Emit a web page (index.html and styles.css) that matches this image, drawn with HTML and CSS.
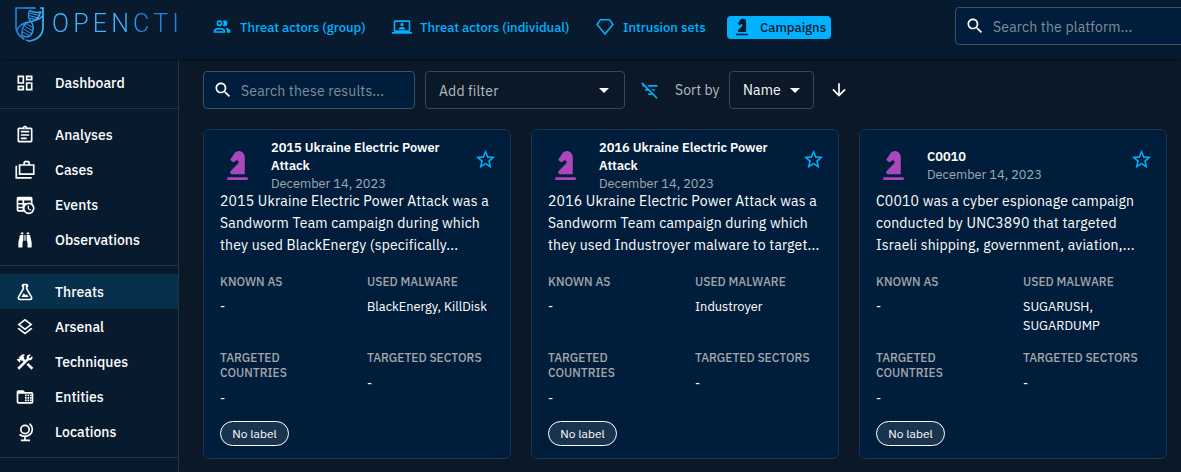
FILE: index.html
```html
<!DOCTYPE html>
<html lang="en">
<head>
<meta charset="utf-8">
<title>OpenCTI - Campaigns</title>
<link rel="stylesheet" href="styles.css">
</head>
<body>
<svg class="defs" width="0" height="0">
  <defs>
    <symbol id="knight" viewBox="0 0 24 24"><path d="M19,22H5V20H19V22M13,2V2C11.75,2 10.58,2.62 9.89,3.66L7,8L9,10L11.06,8.63C11.5,8.32 12.14,8.44 12.45,8.9C12.47,8.93 12.5,8.96 12.5,9V9C12.8,9.59 12.69,10.3 12.22,10.77L7.42,15.57C6.87,16.13 6.87,17.03 7.43,17.58C7.69,17.84 8.05,18 8.42,18H17V6A4,4 0 0,0 13,2Z"/></symbol>
    <symbol id="search" viewBox="0 0 24 24"><path d="M15.5 14h-.79l-.28-.27C15.41 12.59 16 11.11 16 9.5 16 5.91 13.09 3 9.5 3S3 5.91 3 9.5 5.91 16 9.5 16c1.61 0 3.09-.59 4.23-1.57l.27.28v.79l5 4.99L20.49 19l-4.99-5zm-6 0C7.01 14 5 11.99 5 9.5S7.01 5 9.5 5 14 7.01 14 9.5 11.99 14 9.5 14z"/></symbol>
    <symbol id="star" viewBox="0 0 24 24"><path d="m22 9.24-7.19-.62L12 2 9.19 8.63 2 9.24l5.46 4.73L5.82 21 12 17.27 18.18 21l-1.63-7.03L22 9.24zM12 15.4l-3.76 2.27 1-4.28-3.32-2.88 4.38-.38L12 6.1l1.71 4.04 4.38.38-3.32 2.88 1 4.28L12 15.4z"/></symbol>
    <symbol id="caret" viewBox="0 0 24 24"><path d="M7 10l5 5 5-5z"/></symbol>
  </defs>
</svg>
<header class="topbar">
  <div class="logo">
    <svg class="logo-mark" viewBox="0 0 30 36">
      <defs><linearGradient id="shield" gradientUnits="userSpaceOnUse" x1="0" x2="29" y1="0" y2="0"><stop offset="0" stop-color="#1f7bd8"/><stop offset="1" stop-color="#3fb4ff"/></linearGradient></defs>
      <g stroke="url(#shield)">
        <path stroke-width="1.7" d="M20.500 1H1V20c0 5.500 3.500 9.500 8.500 12.500M25 1h3v19c0 8-6 12.500-13.500 14.200L11 33"/>
        <path stroke-width="1.400" d="M14.500 3.500c-1.500 4-2 8 1.500 11 5-1 8.500-4.500 9.500-9.500M14.500 3.500c4 2 8 2.500 12 1.500M16 14.500c-7 1.500-9.500 7-9 14 3 1.500 6.500 2 9-.5 3-4 3-10 0-13.500M27.500 9c-3 3.500-6 4.500-11.500 5.500C9 15 4 18.500 1.500 24"/>
        <path stroke-width="1" d="M14.500 6l10 2.500M14 8.500l9.500 2.500M14.500 11l6.500 1.500M12.500 17.500l5.500 3M10 19.500l8 4.500M8.500 22l8.500 5M8 25l7 4"/>
      </g>
    </svg>
    <span class="logo-text">OPENCTI</span>
  </div>
  <nav class="tabs">
    <a class="tab t-group"><svg class="i20" viewBox="0 0 24 24"><path d="M13.07 10.41A5 5 0 0 0 13.07 4.59A3.39 3.39 0 0 1 15 4A3.5 3.5 0 0 1 15 11A3.39 3.39 0 0 1 13.07 10.41M5.5 7.5A3.5 3.5 0 1 1 9 11A3.5 3.5 0 0 1 5.5 7.5M7.5 7.5A1.5 1.5 0 1 0 9 6A1.5 1.5 0 0 0 7.5 7.5M16 17V19H2V17S2 13 9 13 16 17 16 17M14 17C13.86 16.22 12.67 15 9 15S4.07 16.31 4 17M15.95 13A5.32 5.32 0 0 1 18 17V19H22V17S22 13.37 15.94 13Z"/></svg><span>Threat actors (group)</span></a>
    <a class="tab t-individual"><svg class="i20" viewBox="0 0 24 24"><path fill-rule="evenodd" d="M4 4h16a2 2 0 0 1 2 2v10a2 2 0 0 1-2 2h4v2H0v-2h4a2 2 0 0 1-2-2V6c0-1.100.9-2 2-2zm0 2v10h16V6zm8 1a2 2 0 1 1 0 4 2 2 0 0 1 0-4zm4 8H8v-1c0-1.330 2.670-2 4-2s4 .67 4 2z"/></svg><span>Threat actors (individual)</span></a>
    <a class="tab t-sets"><svg class="i20" viewBox="0 0 24 24"><path fill="none" stroke="currentColor" stroke-width="1.900" d="M6.500 3.200h11L21.500 9 12 20.500 2.500 9z"/></svg><span>Intrusion sets</span></a>
    <a class="tab t-campaigns active"><svg class="i20" viewBox="0 0 24 24"><use href="#knight"/></svg><span>Campaigns</span></a>
  </nav>
  <div class="field global-search"><svg class="i20"><use href="#search"/></svg><span>Search the platform...</span></div>
</header>
<div class="shell">
  <aside class="sidebar">
    <div class="group first">
      <a class="item"><svg class="i20" viewBox="0 0 24 24"><path d="M19 5v2h-4V5h4M9 5v6H5V5h4m10 8v6h-4v-6h4M9 17v2H5v-2h4M21 3h-8v6h8V3zM11 3H3v10h8V3zm10 8h-8v10h8V11zm-10 4H3v6h8v-6z"/></svg><span>Dashboard</span></a>
    </div>
    <div class="group">
      <a class="item"><svg class="i20" viewBox="0 0 24 24"><path d="M7 15h7v2H7zm0-4h10v2H7zm0-4h10v2H7zm12-4h-4.18C14.4 1.84 13.3 1 12 1c-1.3 0-2.4.84-2.82 2H5c-.14 0-.27.01-.4.04-.39.08-.74.28-1.01.55-.18.18-.33.4-.43.64-.1.23-.16.49-.16.77v14c0 .27.06.54.16.78s.25.45.43.64c.27.27.62.47 1.01.55.13.02.26.03.4.03h14c1.1 0 2-.9 2-2V5c0-1.1-.9-2-2-2zm-7-.25c.41 0 .75.34.75.75s-.34.75-.75.75-.75-.34-.75-.75.34-.75.75-.75zM19 19H5V5h14v14z"/></svg><span>Analyses</span></a>
      <a class="item"><svg class="i20" viewBox="0 0 24 24"><path fill="none" stroke="currentColor" stroke-width="2" d="M1.500 7v14.500H20M6.500 6H22.500V17H5.500V6zM11 6V3l1-1h4l1 1v3"/></svg><span>Cases</span></a>
      <a class="item"><svg class="i20" viewBox="0 0 24 24"><path fill-rule="evenodd" d="M4 2h15a2 2 0 0 1 2 2v6.200A7 7 0 0 1 11.200 20H4a2 2 0 0 1-2-2V4c0-1.100.9-2 2-2zm0 4.500v3h5v-3zm7 0v3h8v-3zM4 11.500v2.500h5v-2.500zm0 4.500v2h5v-2z"/><circle class="clock-face" cx="16.500" cy="16" r="6"/><path fill="none" stroke="currentColor" stroke-width="1.500" d="M16 12.500v4l3 1.800"/></svg><span>Events</span></a>
      <a class="item"><svg class="i20" viewBox="0 0 24 24"><path d="M9,20A1,1 0 0,1 8,21H5A1,1 0 0,1 4,20V15L6,6H10V13A1,1 0 0,1 9,14V20M10,5H7V3H10V5M15,20V14A1,1 0 0,1 14,13V6H18L20,15V20A1,1 0 0,1 19,21H16A1,1 0 0,1 15,20M14,5V3H17V5H14Z"/><path opacity=".7" d="M11 6h2v7h-2z"/></svg><span>Observations</span></a>
    </div>
    <div class="group">
      <a class="item selected"><svg class="i20" viewBox="0 0 24 24"><path d="M5,19A1,1 0 0,0 6,20H18A1,1 0 0,0 19,19C19,18.79 18.93,18.59 18.82,18.43L13,8.35V4H11V8.35L5.18,18.43C5.07,18.59 5,18.79 5,19M6,22A3,3 0 0,1 3,19C3,18.4 3.18,17.84 3.5,17.37L9,7.81V6A1,1 0 0,1 8,5V4A2,2 0 0,1 10,2H14A2,2 0 0,1 16,4V5A1,1 0 0,1 15,6V7.81L20.5,17.37C20.82,17.84 21,18.4 21,19A3,3 0 0,1 18,22H6M13,16L14.34,14.66L16.27,18H7.73L10.39,13.39L13,16Z"/></svg><span>Threats</span></a>
      <a class="item"><svg class="i20" viewBox="0 0 24 24"><path d="M11.99 18.54l-7.37-5.73L3 14.07l9 7 9-7-1.63-1.27zM12 16l7.36-5.73L21 9l-9-7-9 7 1.63 1.27L12 16zm0-11.47L17.74 9 12 13.47 6.26 9 12 4.53z"/></svg><span>Arsenal</span></a>
      <a class="item"><svg class="i20" viewBox="0 0 24 24"><path d="m13.7826 15.1719 2.1213-2.1213 5.9963 5.9962-2.1213 2.1213zM17.5 10c1.93 0 3.5-1.57 3.5-3.5 0-.58-.16-1.12-.41-1.6l-2.7 2.7-1.49-1.49 2.7-2.7c-.48-.25-1.02-.41-1.6-.41C15.57 3 14 4.57 14 6.5c0 .41.08.8.21 1.16l-1.85 1.85-1.78-1.78.71-.71-1.41-1.41L12 3.49c-1.17-1.17-3.07-1.17-4.24 0L4.22 7.03l1.41 1.41H2.81l-.71.71 3.54 3.54.71-.71V9.15l1.41 1.41.71-.71 1.78 1.78-7.41 7.41 2.12 2.12L16.34 9.79c.36.13.75.21 1.16.21z"/></svg><span>Techniques</span></a>
      <a class="item"><svg class="i20" viewBox="0 0 24 24"><path fill-rule="evenodd" d="M4 4h6l2 2h8a2 2 0 0 1 2 2v10a2 2 0 0 1-2 2H4a2 2 0 0 1-2-2V6c0-1.100.9-2 2-2zm0 4v10h16V8z"/><path d="M12 9h2v2h-2zm3 0h2v2h-2zm3 0h2v2h-2zm-6 3h2v2h-2zm3 0h2v2h-2zm3 0h2v2h-2zm-6 3h2v2h-2zm3 0h2v2h-2zm3 0h2v2h-2z"/></svg><span>Entities</span></a>
      <a class="item"><svg class="i20" viewBox="0 0 24 24"><path fill="none" stroke="currentColor" stroke-width="2" d="M12 4a5 5 0 1 1 0 10 5 5 0 0 1 0-10zM17.500 2c4.500 4 4 10 .5 13s-9 3-12.500 0M12 17v4M7 22h11"/></svg><span>Locations</span></a>
    </div>
  </aside>
  <main class="content">
    <div class="toolbar">
      <div class="field list-search"><svg class="i20"><use href="#search"/></svg><span>Search these results...</span></div>
      <div class="select filter"><span>Add filter</span><svg class="i24"><use href="#caret"/></svg></div>
      <svg class="i20 clear" viewBox="0 0 24 24"><path d="M10.83 8H21V6H8.83l2 2zm5 5H18v-2h-4.17l2 2zM14 16.83V18h-4v-2h3.17l-3-3H6v-2h2.17l-3-3H3V6h.17L1.39 4.22 2.8 2.81l18.38 18.38-1.41 1.41L14 16.83z"/></svg>
      <span class="sort-label">Sort by</span>
      <div class="select sort"><span>Name</span><svg class="i24"><use href="#caret"/></svg></div>
      <svg class="i20 direction" viewBox="0 0 24 24"><path d="M20 12l-1.41-1.41L13 16.17V4h-2v12.17l-5.58-5.59L4 12l8 8 8-8z"/></svg>
    </div>
    <div class="cards">
      <article class="card">
        <div class="card-head">
          <svg class="knight"><use href="#knight"/></svg>
          <div class="heading"><h2>2015 Ukraine Electric Power<br>Attack</h2><time>December 14, 2023</time></div>
          <svg class="star"><use href="#star"/></svg>
        </div>
        <p class="description">2015 Ukraine Electric Power Attack was a<br>Sandworm Team campaign during which<br>they used BlackEnergy (specifically...</p>
        <dl class="facts">
          <div><dt>KNOWN AS</dt><dd>-</dd></div>
          <div><dt>USED MALWARE</dt><dd>BlackEnergy, KillDisk</dd></div>
          <div><dt>TARGETED<br>COUNTRIES</dt><dd>-</dd></div>
          <div><dt>TARGETED SECTORS</dt><dd>-</dd></div>
        </dl>
        <span class="chip">No label</span>
      </article>
      <article class="card">
        <div class="card-head">
          <svg class="knight"><use href="#knight"/></svg>
          <div class="heading"><h2>2016 Ukraine Electric Power<br>Attack</h2><time>December 14, 2023</time></div>
          <svg class="star"><use href="#star"/></svg>
        </div>
        <p class="description">2016 Ukraine Electric Power Attack was a<br>Sandworm Team campaign during which<br>they used Industroyer malware to target...</p>
        <dl class="facts">
          <div><dt>KNOWN AS</dt><dd>-</dd></div>
          <div><dt>USED MALWARE</dt><dd>Industroyer</dd></div>
          <div><dt>TARGETED<br>COUNTRIES</dt><dd>-</dd></div>
          <div><dt>TARGETED SECTORS</dt><dd>-</dd></div>
        </dl>
        <span class="chip">No label</span>
      </article>
      <article class="card">
        <div class="card-head">
          <svg class="knight"><use href="#knight"/></svg>
          <div class="heading"><h2>C0010</h2><time>December 14, 2023</time></div>
          <svg class="star"><use href="#star"/></svg>
        </div>
        <p class="description">C0010 was a cyber espionage campaign<br>conducted by UNC3890 that targeted<br>Israeli shipping, government, aviation,...</p>
        <dl class="facts">
          <div><dt>KNOWN AS</dt><dd>-</dd></div>
          <div><dt>USED MALWARE</dt><dd>SUGARUSH,<br>SUGARDUMP</dd></div>
          <div><dt>TARGETED<br>COUNTRIES</dt><dd>-</dd></div>
          <div><dt>TARGETED SECTORS</dt><dd>-</dd></div>
        </dl>
        <span class="chip">No label</span>
      </article>
    </div>
  </main>
</div>
</body>
</html>
```
FILE: styles.css
```css
* { box-sizing: border-box; }
body { margin: 0; height: 472px; overflow: hidden; background: #0a1827; color: #fff; font-family: "IBM Plex Sans", Roboto, sans-serif; font-size: 14px; }
svg { fill: currentColor; flex: none; display: block; }
.defs { position: absolute; }
.i20 { width: 20px; height: 20px; }
.i24 { width: 24px; height: 24px; }
span { white-space: nowrap; }

.topbar { display: flex; height: 59px; background: #071a2e; box-shadow: 0 1px 2px #0006; position: relative; }
.logo { display: flex; flex: none; width: 203px; padding: 7px 0 0 15px; }
.logo-mark { width: 30px; height: 36px; fill: none; }
.logo-text { margin-left: 7px; font-family: Roboto, sans-serif; font-weight: 300; font-size: 25px; line-height: 34px; letter-spacing: 4.2px; background: linear-gradient(90deg, #3fb4ff 55%, #2a80d8 70%); background-clip: text; -webkit-background-clip: text; color: transparent; }
.tabs { display: flex; flex: none; align-items: center; height: 54px; width: 752px; color: #00b1ff; font-weight: 500; font-size: 13px; }
.tab { display: flex; align-items: center; height: 23px; padding: 0 5px 0 9px; border-radius: 4px; }
.tab span { margin-left: 8px; }
.t-group { width: 180px; }
.t-individual { width: 203px; }
.t-sets { width: 141px; }
.t-campaigns { width: 104px; padding-left: 5px; }
.active { background: #00b1ff; color: #071a2e; }

.field { display: flex; align-items: center; height: 38px; padding-left: 9px; border: 1px solid #3c5066; border-radius: 4px; background: #001e3c; }
.field span { margin-left: 8px; padding-top: 1px; color: #7f8e9d; letter-spacing: .17px; }
.global-search { width: 240px; flex: none; margin-top: 7px; }
.global-search span { padding-top: 2px; }

.shell { display: flex; }
.sidebar { width: 179px; height: 413px; flex: none; background: #071a2e; border-right: 1px solid #243447; font-weight: 500; }
.group { border-bottom: 1px solid #243447; padding: 8px 0; }
.group.first { padding: 6px 0 8px; }
.item { display: flex; align-items: center; height: 35px; padding-left: 15px; }
.item span { margin-left: 20px; }
.selected { background: #07304c; }
.clock-face { fill: #071a2e; stroke: currentColor; stroke-width: 2; }

.content { padding: 12px 0 0 24px; }
.toolbar { display: flex; align-items: center; height: 38px; }
.list-search { width: 212px; }
.select { display: flex; align-items: center; justify-content: space-between; height: 38px; border: 1px solid #3c4753; border-radius: 4px; letter-spacing: .15px; }
.filter { width: 200px; margin-left: 10px; padding: 0 8px 0 13px; color: #b5bbc2; }
.filter span { padding-top: 2px; }
.filter svg, .sort svg { color: #fff; }
.clear { margin-left: 15px; color: #00b1ff; }
.sort-label { margin-left: 15px; width: 54px; color: #b5bbc2; }
.sort { width: 85px; padding: 0 6px 0 13px; }
.direction { margin-left: 15px; }

.cards { display: grid; grid-template-columns: repeat(3, 308px); gap: 20px; margin-top: 20px; }
.card { height: 330px; padding: 8px 16px 0; border: 1px solid #1d3551; border-radius: 6px; background: #001e3c; }
.card-head { display: flex; height: 52px; }
.knight { width: 35px; height: 35px; margin: 10px 16px 0 0; color: #ab47bc; }
.heading { display: flex; flex-direction: column; justify-content: center; flex: 1; height: 56px; }
.star { width: 23px; height: 23px; margin: 10px -3px 0 0; color: #00b1ff; }
h2 { margin: 0; font-size: 12.8px; line-height: 18px; font-weight: 600; white-space: nowrap; }
time { font-size: 12.8px; line-height: 18px; color: #a0aab5; }
.description { margin: 0; font-size: 14px; line-height: 22px; letter-spacing: .18px; white-space: nowrap; }
.facts { display: grid; grid-template-columns: 147px 1fr; grid-template-rows: 76px 71px; margin: 18px 0 0; }
dt { font-size: 12px; line-height: 15px; color: #a2a6a9; font-weight: 500; white-space: nowrap; }
dd { margin: 9px 0 0; font-size: 12.8px; line-height: 19px; white-space: nowrap; }
.facts div:nth-child(-n+2) dd { margin-top: 8px; }
.chip { display: flex; align-items: center; justify-content: center; width: 69px; height: 25px; border: 1px solid #fff; border-radius: 13px; background: #1a344f; font-size: 12px; }
```
